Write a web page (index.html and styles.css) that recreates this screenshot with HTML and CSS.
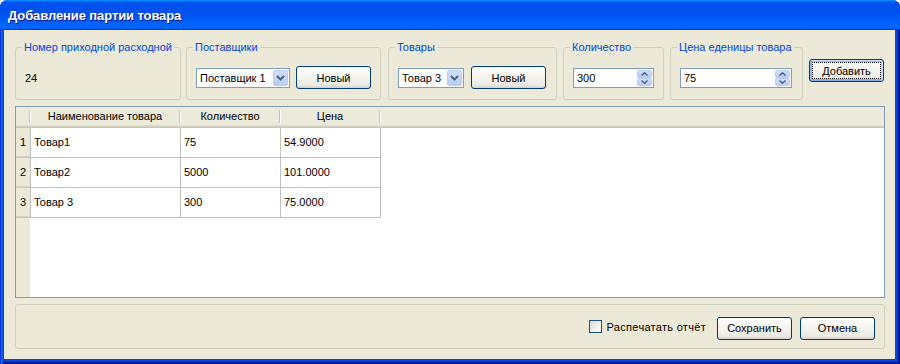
FILE: index.html
```html
<!DOCTYPE html>
<html lang="ru">
<head>
  <meta charset="UTF-8" />
  <title>Добавление партии товара</title>
  <link rel="stylesheet" href="styles.css">
</head>
<body>
  <div class="window">
    <div class="titlebar">Добавление партии товара</div>

    <div class="windowBody">
      <!-- Top controls -->
      <div class="topRow">
        <fieldset class="group groupNumber">
          <legend>Номер приходной расходной</legend>
          <div class="groupRow"><span class="value">24</span></div>
        </fieldset>

        <fieldset class="group groupSupplier">
          <legend>Поставщики</legend>
          <div class="groupRow">
            <div class="combo comboSupplier">
              <span class="comboText">Поставщик 1</span>
              <span class="comboBtn">
                <svg width="9" height="6" viewBox="0 0 9 6"><path d="M1 1 L4.5 4.5 L8 1" fill="none" stroke="#4D6185" stroke-width="2"/></svg>
              </span>
            </div>
            <button class="btn">Новый</button>
          </div>
        </fieldset>

        <fieldset class="group groupProduct">
          <legend>Товары</legend>
          <div class="groupRow">
            <div class="combo comboProduct">
              <span class="comboText">Товар 3</span>
              <span class="comboBtn">
                <svg width="9" height="6" viewBox="0 0 9 6"><path d="M1 1 L4.5 4.5 L8 1" fill="none" stroke="#4D6185" stroke-width="2"/></svg>
              </span>
            </div>
            <button class="btn">Новый</button>
          </div>
        </fieldset>

        <fieldset class="group groupQty">
          <legend>Количество</legend>
          <div class="groupRow">
            <div class="spin spinQty">
              <span class="spinText">300</span>
              <span class="spinBtns">
                <span class="spinBtn"><svg width="7" height="4" viewBox="0 0 7 4"><path d="M0.5 3.5 L3.5 0.8 L6.5 3.5" fill="none" stroke="#4D6185" stroke-width="1.5"/></svg></span>
                <span class="spinBtn"><svg width="7" height="4" viewBox="0 0 7 4"><path d="M0.5 0.5 L3.5 3.2 L6.5 0.5" fill="none" stroke="#4D6185" stroke-width="1.5"/></svg></span>
              </span>
            </div>
          </div>
        </fieldset>

        <fieldset class="group groupPrice">
          <legend>Цена еденицы товара</legend>
          <div class="groupRow">
            <div class="spin spinPrice">
              <span class="spinText">75</span>
              <span class="spinBtns">
                <span class="spinBtn"><svg width="7" height="4" viewBox="0 0 7 4"><path d="M0.5 3.5 L3.5 0.8 L6.5 3.5" fill="none" stroke="#4D6185" stroke-width="1.5"/></svg></span>
                <span class="spinBtn"><svg width="7" height="4" viewBox="0 0 7 4"><path d="M0.5 0.5 L3.5 3.2 L6.5 0.5" fill="none" stroke="#4D6185" stroke-width="1.5"/></svg></span>
              </span>
            </div>
          </div>
        </fieldset>

        <button class="btn btnDefault addButton">Добавить</button>
      </div>

      <!-- Grid -->
      <div class="grid">
        <div class="gridHead">
          <div class="headCell rowHeadCell"></div>
          <div class="headCell colName">Наименование товара</div>
          <div class="headCell colQty">Количество</div>
          <div class="headCell colPrice">Цена</div>
        </div>
        <div class="gridBody">
          <div class="gridRow">
            <div class="rowHead">1</div>
            <div class="cell colName">Товар1</div>
            <div class="cell colQty">75</div>
            <div class="cell colPrice">54.9000</div>
          </div>
          <div class="gridRow">
            <div class="rowHead">2</div>
            <div class="cell colName">Товар2</div>
            <div class="cell colQty">5000</div>
            <div class="cell colPrice">101.0000</div>
          </div>
          <div class="gridRow">
            <div class="rowHead">3</div>
            <div class="cell colName">Товар 3</div>
            <div class="cell colQty">300</div>
            <div class="cell colPrice">75.0000</div>
          </div>
        </div>
      </div>

      <!-- Bottom -->
      <div class="footer">
        <label class="check">
          <span class="checkBox"></span>
          <span class="checkText">Распечатать отчёт</span>
        </label>
        <button class="btn">Сохранить</button>
        <button class="btn">Отмена</button>
      </div>
    </div>
  </div>
</body>
</html>
```

FILE: styles.css
```css
body {
  margin: 0;
  background-color: #fff;
  font-family: "Liberation Sans", Arial, sans-serif;
  font-size: 11px;
  color: #000;
}

.window {
  width: 900px;
  height: 364px;
  display: flex;
  flex-direction: column;
  border-radius: 8px 8px 0 0;
  background-color: #0A45E0;
  box-shadow: inset 1px 0 #0831D9, inset 2px 0 #166AEE, inset 3px 0 #0855DD,
    inset -1px -1px #00138C, inset -2px -2px #001EA0, inset -3px -3px #003BDA;
}

.titlebar {
  height: 30px;
  box-sizing: border-box;
  padding: 1px 0 0 8px;
  display: flex;
  align-items: center;
  border-radius: 8px 8px 0 0;
  background: linear-gradient(#0997FF, #0053EE 8%, #0050EE 40%, #0066FF 88%, #0066FF 93%, #005BFF 95%, #003DD7 96%, #003DD7);
  color: #fff;
  font-size: 13px;
  font-weight: bold;
  letter-spacing: -0.1px;
  text-shadow: 1px 1px #0F1089;
}

.windowBody {
  flex: 1;
  margin: 0 5px 5px 4px;
  padding: 11px 10px 10px 11px;
  background-color: #ECE9D8;
  display: flex;
  flex-direction: column;
}

/* Top row */
.topRow {
  display: flex;
  align-items: flex-start;
  height: 59px;
}

.group {
  box-sizing: border-box;
  height: 59px;
  margin: 0 6px 0 0;
  padding: 12px 6px 0;
  border: 1px solid #D0D0BF;
  border-radius: 3px;
}

.group legend {
  padding: 0 2px;
  line-height: 13px;
  color: #0046D5;
}

.groupNumber { width: 166px; margin-right: 5px; }
.groupSupplier { width: 195px; margin-right: 7px; }
.groupProduct { width: 169px; }
.groupQty { width: 101px; }
.groupPrice { width: 133px; }

.groupRow {
  display: flex;
  align-items: center;
  gap: 6px;
  height: 23px;
  padding-left: 3px;
}

.groupProduct .groupRow { gap: 7px; }

.value {
  padding-top: 1px;
}

.combo,
.spin {
  box-sizing: border-box;
  height: 20px;
  display: flex;
  padding: 1px;
  border: 1px solid #7F9DB9;
  background-color: #fff;
}

.comboSupplier { width: 94px; }
.comboProduct { width: 66px; }
.spinQty { width: 81px; }
.spinPrice { width: 112px; }

.comboText,
.spinText {
  flex: 1;
  padding-left: 2px;
  line-height: 16px;
  white-space: nowrap;
  overflow: hidden;
}

.comboBtn {
  width: 15px;
  display: flex;
  align-items: center;
  justify-content: center;
  border: 1px solid #BACCF6;
  border-radius: 2px;
  box-sizing: border-box;
  background: linear-gradient(#D2DEFB, #B9CDF7);
}

.spinBtns {
  width: 15px;
  display: flex;
  flex-direction: column;
}

.spinBtn {
  flex: 1;
  display: flex;
  align-items: center;
  justify-content: center;
  border: 1px solid #BACCF6;
  border-radius: 2px;
  background: linear-gradient(#D2DEFB, #B9CDF7);
}

/* Buttons */
.btn {
  box-sizing: border-box;
  width: 75px;
  height: 23px;
  padding: 0;
  border: 1px solid #003C74;
  border-radius: 3px;
  background: linear-gradient(#FFFFFF, #F4F3EE 50%, #ECEBE6 86%, #D6D0C5);
  font-family: inherit;
  font-size: 11px;
  color: #000;
}

.btnDefault {
  box-shadow: inset -1px 1px #CEE7FF, inset 1px 2px #98B8EA, inset -2px 2px #BCD4F6,
    inset 1px -1px #89ADE4, inset 2px -2px #89ADE4;
  outline: 1px dotted #000;
  outline-offset: -4px;
}

.addButton {
  margin-top: 18px;
}

/* Grid */
.grid {
  box-sizing: border-box;
  height: 192px;
  margin-top: 6px;
  border: 1px solid #7F9DB9;
  display: flex;
  flex-direction: column;
  background: linear-gradient(to right, #ECE9D8 14px, #fff 14px);
}

.gridHead {
  height: 21px;
  box-sizing: border-box;
  display: flex;
  background-color: #EBEADB;
  box-shadow: inset 0 -1px #CBC7B8, inset 0 -2px #D6D2C2, inset 0 -3px #E2DECD;
}

.headCell {
  position: relative;
  box-sizing: border-box;
  line-height: 19px;
  text-align: center;
}

.headCell::after {
  content: "";
  position: absolute;
  top: 3px;
  bottom: 5px;
  right: 0;
  width: 1px;
  background-color: #C7C5B2;
  box-shadow: 1px 0 #fff;
}

.rowHeadCell { width: 14px; }
.gridHead .colName { width: 150px; }
.gridHead .colQty { width: 100px; }
.gridHead .colPrice { width: 100px; }

.gridRow {
  display: flex;
  height: 30px;
}

.rowHead {
  width: 14px;
  box-sizing: border-box;
  text-align: center;
  line-height: 28px;
  color: #000;
  box-shadow: inset 0 -1px #CBC7B8, inset 0 -2px #D6D2C2;
}

.cell {
  box-sizing: border-box;
  padding-left: 3px;
  line-height: 29px;
  border-right: 1px solid #C0C0C0;
  border-bottom: 1px solid #C0C0C0;
  background-color: #fff;
}

.gridRow .colName {
  width: 151px;
  border-left: 1px solid #C0C0C0;
}

.gridRow .colQty,
.gridRow .colPrice {
  width: 100px;
}

/* Footer */
.footer {
  box-sizing: border-box;
  height: 45px;
  margin-top: 6px;
  padding-right: 9px;
  display: flex;
  align-items: center;
  justify-content: flex-end;
  gap: 8px;
  border: 1px solid #D0D0BF;
  border-radius: 3px;
}

.footer .btn {
  margin-top: 3px;
}

.check {
  display: flex;
  align-items: center;
  gap: 5px;
  margin-right: 3px;
}

.checkText {
  letter-spacing: 0.3px;
}

.checkBox {
  width: 13px;
  height: 13px;
  box-sizing: border-box;
  border: 1px solid #1C5180;
  background: linear-gradient(135deg, #DCDCD7, #FFFFFF);
}
```
